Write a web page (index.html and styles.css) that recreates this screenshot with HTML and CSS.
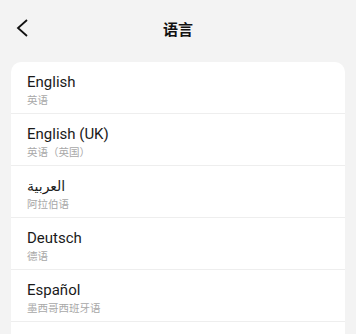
FILE: index.html
```html
<!DOCTYPE html>
<html lang="zh">
<head>
<meta charset="utf-8">
<link rel="stylesheet" href="styles.css">
</head>
<body>
<div class="app">
  <header class="topbar">
    <span class="back">
      <svg width="12" height="18" viewBox="0 0 12 18"><polyline points="11,1 2,9 11,17" fill="none" stroke="#111" stroke-width="1.8" stroke-linejoin="miter"/></svg>
    </span>
    <h1 class="title">语言</h1>
  </header>
  <ul class="list">
    <li class="row"><span class="name">English</span><span class="sub">英语</span></li>
    <li class="row"><span class="name">English (UK)</span><span class="sub">英语（英国）</span></li>
    <li class="row"><span class="name arabic">العربية</span><span class="sub">阿拉伯语</span></li>
    <li class="row"><span class="name">Deutsch</span><span class="sub">德语</span></li>
    <li class="row"><span class="name">Español</span><span class="sub">墨西哥西班牙语</span></li>
    <li class="row"><span class="name">Español (España)</span><span class="sub">西班牙语</span></li>
  </ul>
</div>
</body>
</html>
```
FILE: styles.css
```css
html, body {
  margin: 0;
  padding: 0;
  background: #ffffff;
  height: 334px;
  overflow: hidden;
}
.app {
  width: 356px;
  height: 334px;
  background: #f3f3f3;
  font-family: Roboto, "Noto Sans CJK SC", sans-serif;
  overflow: hidden;
}
.topbar {
  position: relative;
  height: 57px;
  display: flex;
  align-items: center;
  justify-content: center;
}
.back {
  position: absolute;
  left: 16px;
  top: 19px;
  width: 12px;
  height: 18px;
  display: block;
}
.back svg { display: block; }
.title {
  margin: 0;
  font-size: 15px;
  font-weight: 700;
  color: #111;
  font-family: "Noto Sans CJK SC", sans-serif;
  line-height: 20px;
}
.list {
  list-style: none;
  margin: 5px 11px 0;
  padding: 0;
  background: #fff;
  border-radius: 10px;
}
.row {
  height: 51px;
  box-sizing: content-box;
  border-bottom: 1px solid #eeeeee;
  padding: 0 16px;
  display: flex;
  flex-direction: column;
  justify-content: flex-start;
}
.name {
  padding-top: 10px;
  font-size: 15px;
  line-height: 20px;
  color: #1a1a1a;
}
.arabic {
  font-family: "DejaVu Sans", sans-serif;
  font-size: 14px;
}
.sub {
  font-size: 10.5px;
  line-height: 16px;
  color: #a8a8a8;
  font-family: "Noto Sans CJK SC", sans-serif;
}
```
